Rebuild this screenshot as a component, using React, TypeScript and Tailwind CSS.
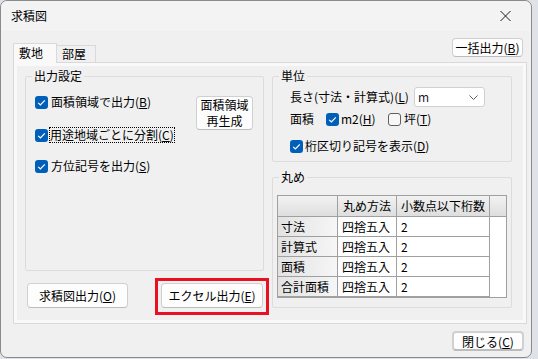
import React from 'react';

const font = "font-['Noto_Sans_CJK_JP','Noto_Sans_CJK_SC',sans-serif]";

const Key: React.FC<{ k: string }> = ({ k }) => (
  <>
    (<span className="underline underline-offset-[1px]">{k}</span>)
  </>
);

const Check: React.FC<{ checked?: boolean }> = ({ checked }) =>
  checked ? (
    <span className="flex h-[13px] w-[13px] shrink-0 items-center justify-center rounded-[3px] bg-[#005fb8]">
      <svg width="13" height="13" viewBox="0 0 13 13">
        <path d="M3.2 6.8 L5.4 9 L9.8 4.4" fill="none" stroke="#fff" strokeWidth="1.2" />
      </svg>
    </span>
  ) : (
    <span className="block h-[13px] w-[13px] shrink-0 rounded-[3px] border border-[#5f5f5f] bg-[#f7f7f7]" />
  );

const Button: React.FC<{ className?: string; children: React.ReactNode }> = ({ className = '', children }) => (
  <div
    className={`flex shrink-0 items-center justify-center rounded-[4px] border border-[#d0d0d0] border-b-[#bcbcbc] bg-[#fdfdfd] text-[12px] leading-[15px] text-black ${className}`}
  >
    {children}
  </div>
);

const Group: React.FC<{ label: string; className?: string; children: React.ReactNode }> = ({ label, className = '', children }) => (
  <fieldset className={`rounded-[2px] border border-[#dcdcdc] ${className}`}>
    <legend className="ml-[6px] px-[2px] leading-[16px]">{label}</legend>
    {children}
  </fieldset>
);

const rows = ['寸法', '計算式', '面積', '合計面積'];

const RoundingTable: React.FC = () => (
  <div className="ml-[4px] mt-[10px] h-[103px] w-[230px] border border-[#a0a0a0] bg-white">
    <div className="flex h-[21px] border-b border-[#a0a0a0] bg-linear-to-b from-[#f2f2f2] to-[#dedede]">
      <div className="w-[60px] border-r border-[#a0a0a0]" />
      <div className="flex w-[59px] items-center justify-center border-r border-[#a0a0a0]">丸め方法</div>
      <div className="flex w-[93px] items-center justify-center border-r border-[#a0a0a0]">小数点以下桁数</div>
      <div className="flex-1" />
    </div>
    {rows.map((r) => (
      <div key={r} className="flex h-[20px] w-[212px] border-b border-[#a0a0a0]">
        <div className="flex w-[60px] items-center border-r border-[#a0a0a0] bg-linear-to-r from-[#e2e2e2] to-[#f6f6f6] pl-[3px]">
          {r}
        </div>
        <div className="flex w-[59px] items-center border-r border-[#a0a0a0] pl-[4px]">四捨五入</div>
        <div className="flex w-[93px] items-center border-r border-[#a0a0a0] pl-[4px]">2</div>
      </div>
    ))}
  </div>
);

const App: React.FC = () => {
  return (
    <div className={`h-[359px] w-[538px] overflow-hidden bg-[#dfe3e8] text-[12px] leading-[16px] text-black ${font}`}>
      <div className="flex h-[358px] w-[532px] flex-col rounded-[7px] border border-[#8a8a8a] bg-[#f0f0f0]">
        {/* title bar */}
        <div className="flex h-[30px] shrink-0 items-center justify-between rounded-t-[7px] bg-[#f3f3f3] pl-[10px] pr-[3px]">
          <span className="text-[12px] leading-[16px]">求積図</span>
          <svg width="46" height="30" viewBox="0 0 46 30">
            <path d="M18.5 10 L28.5 20 M28.5 10 L18.5 20" stroke="#1a1a1a" strokeWidth="1" />
          </svg>
        </div>

        <div className="w-[526px] pl-[12px]">
          {/* tabs */}
          <div className="flex h-[31px] w-[514px] items-end">
            <div className="relative z-10 -mb-px flex h-[20px] w-[44px] items-center border border-b-0 border-[#d9d9d9] bg-[#f9f9f9] pl-[5px] pb-[1px]">
              敷地
            </div>
            <div className="flex h-[17px] w-[39px] items-center border border-b-0 border-l-0 border-[#d9d9d9] bg-[#f0f0f0] pl-[5px]">
              部屋
            </div>
            <Button className="mb-auto ml-auto mr-[4px] mt-[7px] h-[19px] w-[71px]">
              一括出力<Key k="B" />
            </Button>
          </div>

          {/* panel */}
          <div className="h-[262px] w-[514px] border border-[#d9d9d9] bg-[#f9f9f9] p-[3px]">
            <div className="flex h-full w-full bg-[#f0f0f0] pl-[8px]">
              {/* left column */}
              <div className="flex w-[239px] shrink-0 flex-col">
                <Group label="出力設定" className="mt-[2px] h-[203px]">
                  <div className="flex pl-[9px]">
                    <div className="flex w-[161px] shrink-0 flex-col">
                      <div className="mt-[10px] flex h-[16px] items-center gap-[3px]">
                        <Check checked />
                        <span>
                          面積領域で出力<Key k="B" />
                        </span>
                      </div>
                      <div className="mt-[17px] flex h-[16px] items-center gap-[2px]">
                        <Check checked />
                        <span className="inline-block h-[14px] leading-[13px] outline-1 outline-dotted outline-black">
                          用途地域ごとに分割<Key k="C" />
                        </span>
                      </div>
                      <div className="mt-[15px] flex h-[16px] items-center gap-[3px]">
                        <Check checked />
                        <span>
                          方位記号を出力<Key k="S" />
                        </span>
                      </div>
                    </div>
                    <Button className="mt-[12px] h-[34px] w-[57px] flex-col">
                      <span className="block leading-[16px]">面積領域</span>
                      <span className="block leading-[16px]">再生成</span>
                    </Button>
                  </div>
                </Group>

                <div className="mt-[7px] flex items-start">
                  <Button className="ml-[2px] mt-[5px] h-[25px] w-[101px]">
                    求積図出力<Key k="O" />
                  </Button>
                  <div className="ml-[27px] h-[37px] w-[114px] shrink-0 border-[3px] border-[#e81123] pl-[3px] pt-[2px]">
                    <Button className="h-[25px] w-[102px]">
                      エクセル出力<Key k="E" />
                    </Button>
                  </div>
                </div>
              </div>

              {/* right column */}
              <div className="ml-[8px] flex w-[240px] shrink-0 flex-col">
                <Group label="単位" className="mt-[2px] h-[94px]">
                  <div className="flex flex-col pl-[17px]">
                    <div className="mt-[3px] flex h-[20px] items-center">
                      <span className="w-[124px]">
                        長さ(寸法・計算式)<Key k="L" />
                      </span>
                      <div className="flex h-[20px] w-[71px] items-center justify-between rounded-[3px] border border-[#d0d0d0] bg-white pl-[3px] pr-[6px]">
                        <span className="text-[#1a1a2e]">m</span>
                        <svg width="9" height="5" viewBox="0 0 9 5">
                          <path d="M0.5 0.5 L4.5 4.5 L8.5 0.5" fill="none" stroke="#606060" strokeWidth="1" />
                        </svg>
                      </div>
                    </div>
                    <div className="mt-[4px] flex h-[16px] items-center">
                      <span className="w-[36px]">面積</span>
                      <div className="flex w-[62px] items-center gap-[2px]">
                        <Check checked />
                        <span>
                          m2<Key k="H" />
                        </span>
                      </div>
                      <div className="flex items-center gap-[3px]">
                        <Check />
                        <span>
                          坪<Key k="T" />
                        </span>
                      </div>
                    </div>
                    <div className="mt-[11px] flex h-[16px] items-center gap-[2px]">
                      <Check checked />
                      <span>
                        桁区切り記号を表示<Key k="D" />
                      </span>
                    </div>
                  </div>
                </Group>

                <Group label="丸め" className="mt-[7px] h-[139px]">
                  <RoundingTable />
                </Group>
              </div>
            </div>
          </div>

          {/* footer */}
          <div className="mt-[7px] flex w-[514px] justify-end">
            <Button className="mr-[3px] h-[20px] w-[72px] border-2 border-[#0067c0] border-b-[#0067c0]">
              閉じる<Key k="C" />
            </Button>
          </div>
        </div>
      </div>
    </div>
  );
};

export default App;
